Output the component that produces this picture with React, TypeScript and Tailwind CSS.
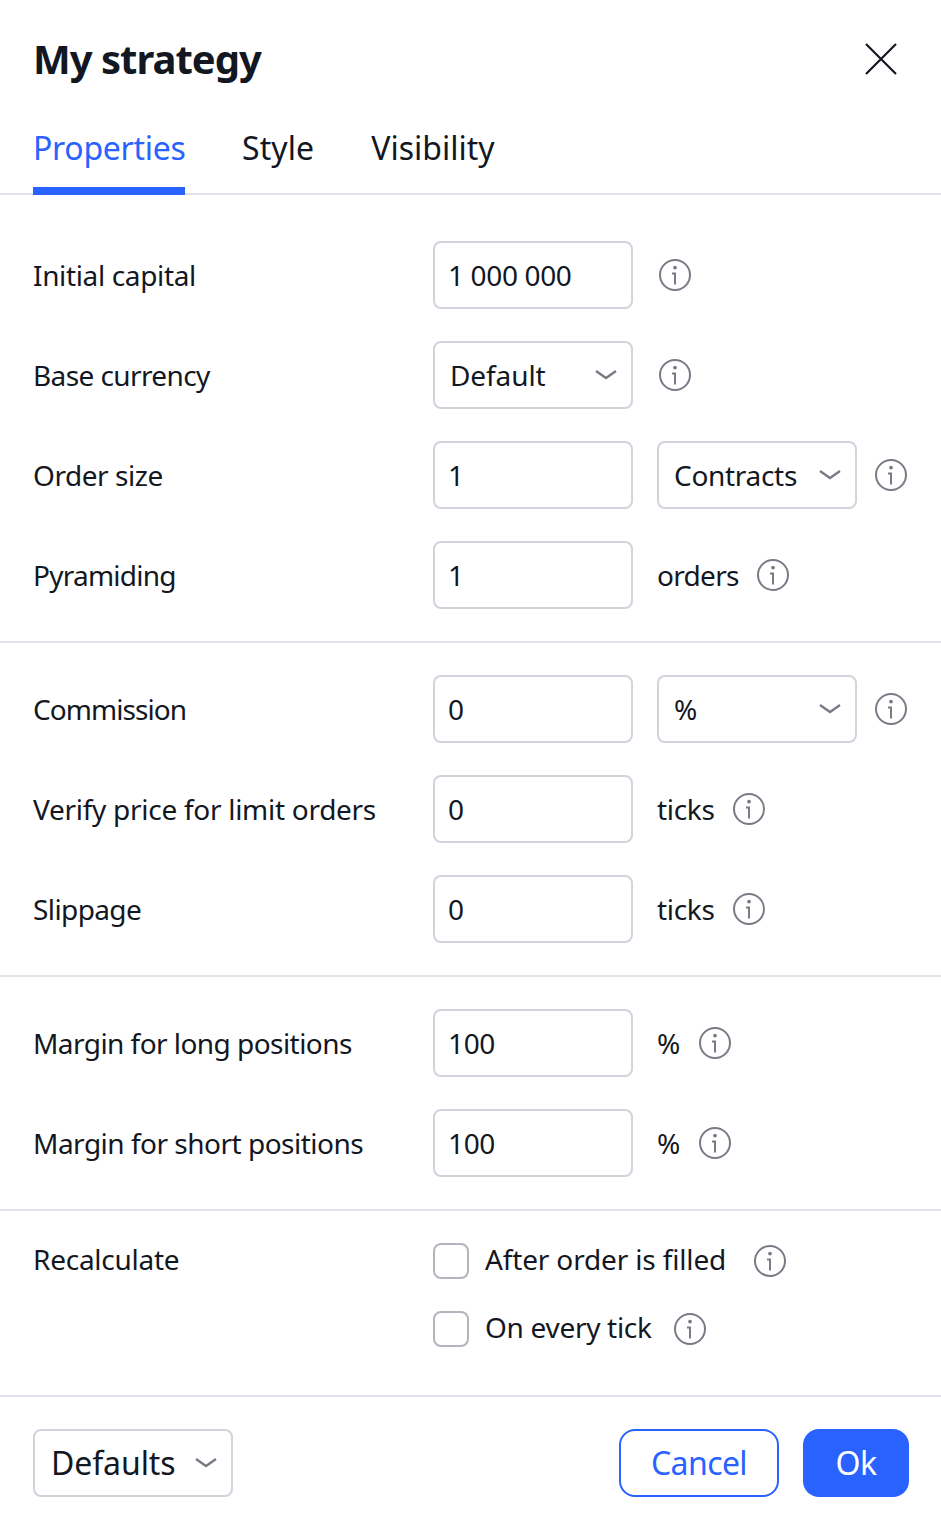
import type { ReactNode } from "react";

function InfoIcon() {
  return (
    <svg className="w-8 h-8 shrink-0 text-[#787b86]" viewBox="0 0 32 32" fill="none" stroke="currentColor">
      <circle cx="16" cy="16" r="15" strokeWidth={2} />
      <circle cx="16" cy="8.6" r="1.9" fill="currentColor" stroke="none" />
      <path d="M13 14.5h3v11" strokeWidth={2} />
    </svg>
  );
}

function Chevron() {
  return (
    <svg className="w-6 h-6 shrink-0 text-[#787b86]" viewBox="0 0 24 24" fill="none" stroke="currentColor" strokeWidth={2.4}>
      <path d="M2 8l10 7 10-7" />
    </svg>
  );
}

function Field({ value }: { value: string }) {
  return (
    <div className="w-[200px] h-[68px] shrink-0 flex items-center px-[13px] border-2 border-[#d1d4dc] rounded-lg bg-white tracking-[-0.35px]">
      {value}
    </div>
  );
}

function Select({ value, tracking = "tracking-[-0.1px]" }: { value: string; tracking?: string }) {
  return (
    <div className={`w-[200px] h-[68px] shrink-0 flex items-center justify-between pl-[15px] pr-[13px] border-2 border-[#d1d4dc] rounded-lg bg-white ${tracking}`}>
      <span>{value}</span>
      <Chevron />
    </div>
  );
}

function Row({ label, tracking = "tracking-[-0.35px]", children }: { label: string; tracking?: string; children: ReactNode }) {
  return (
    <div className="flex items-center h-[68px]">
      <div className={`w-[400px] shrink-0 ${tracking}`}>{label}</div>
      {children}
    </div>
  );
}

function Unit({ text, tracking }: { text: string; tracking: string }) {
  return (
    <div className={`flex items-center ml-6 gap-[18px] ${tracking}`}>
      <span>{text}</span>
      <InfoIcon />
    </div>
  );
}

function CheckRow({ label, width, tracking }: { label: string; width: string; tracking: string }) {
  return (
    <div className={`flex items-center h-9 ${width}`}>
      <div className="w-9 h-9 border-2 border-[#b2b5be] rounded-lg shrink-0" />
      <span className={`ml-4 leading-[32px] pb-1 whitespace-nowrap ${tracking}`}>{label}</span>
      <div className="ml-auto"><InfoIcon /></div>
    </div>
  );
}

export default function App() {
  return (
    <div className="w-[941px] h-[1521px] bg-white text-[#131722] text-[28px] font-['Noto_Sans',sans-serif] flex flex-col">
      {/* Header */}
      <div className="flex items-center justify-between pl-[33px] pr-[44px] h-[121px] pb-1 shrink-0">
        <h1 className="text-[40px] font-bold tracking-[-1px]">My strategy</h1>
        <svg className="w-8 h-8" viewBox="0 0 32 32" fill="none" stroke="currentColor" strokeWidth={2.2}>
          <path d="M1 1l30 30M31 1L1 31" />
        </svg>
      </div>

      {/* Tabs */}
      <div className="flex gap-[57px] pl-[33px] h-[74px] border-b-2 border-[#e0e3eb] text-[32px] shrink-0">
        <div className="h-[74px] w-[152px] pt-[3px] border-b-[8px] border-[#2962ff] text-[#2962ff] whitespace-nowrap tracking-[-0.3px]">Properties</div>
        <div className="pt-[3px] tracking-[0.1px]">Style</div>
        <div className="pt-[3px]">Visibility</div>
      </div>

      {/* Position settings */}
      <div className="pl-[33px] pt-[46px] pb-8 flex flex-col gap-8 border-b-2 border-[#e0e3eb]">
        <Row label="Initial capital">
          <Field value="1 000 000" />
          <div className="ml-[26px]"><InfoIcon /></div>
        </Row>
        <Row label="Base currency" tracking="tracking-[-0.6px]">
          <Select value="Default" />
          <div className="ml-[26px]"><InfoIcon /></div>
        </Row>
        <Row label="Order size" tracking="tracking-[-0.45px]">
          <Field value="1" />
          <div className="ml-6"><Select value="Contracts" tracking="tracking-[-0.3px]" /></div>
          <div className="ml-[18px]"><InfoIcon /></div>
        </Row>
        <Row label="Pyramiding" tracking="tracking-[-0.75px]">
          <Field value="1" />
          <Unit text="orders" tracking="tracking-[-0.7px]" />
        </Row>
      </div>

      {/* Costs */}
      <div className="pl-[33px] pt-8 pb-8 flex flex-col gap-8 border-b-2 border-[#e0e3eb]">
        <Row label="Commission" tracking="tracking-[-0.95px]">
          <Field value="0" />
          <div className="ml-6"><Select value="%" /></div>
          <div className="ml-[18px]"><InfoIcon /></div>
        </Row>
        <Row label="Verify price for limit orders" tracking="tracking-[-0.28px]">
          <Field value="0" />
          <Unit text="ticks" tracking="tracking-[-0.3px]" />
        </Row>
        <Row label="Slippage" tracking="tracking-[-0.6px]">
          <Field value="0" />
          <Unit text="ticks" tracking="tracking-[-0.3px]" />
        </Row>
      </div>

      {/* Margin */}
      <div className="pl-[33px] pt-8 pb-8 flex flex-col gap-8 border-b-2 border-[#e0e3eb]">
        <Row label="Margin for long positions" tracking="tracking-[-0.55px]">
          <Field value="100" />
          <Unit text="%" tracking="tracking-[0.5px]" />
        </Row>
        <Row label="Margin for short positions" tracking="tracking-[-0.5px]">
          <Field value="100" />
          <Unit text="%" tracking="tracking-[0.5px]" />
        </Row>
      </div>

      {/* Recalculate */}
      <div className="pl-[33px] pt-8 pb-12 flex border-b-2 border-[#e0e3eb]">
        <div className="w-[400px] shrink-0 tracking-[-0.25px] leading-[32px]">Recalculate</div>
        <div className="flex flex-col gap-8">
          <CheckRow label="After order is filled" width="w-[353px]" tracking="tracking-[-0.15px]" />
          <CheckRow label="On every tick" width="w-[273px]" tracking="tracking-[-0.3px]" />
        </div>
      </div>

      {/* Footer */}
      <div className="flex items-center justify-between pl-[33px] pr-8 pt-8">
        <div className="w-[200px] h-[68px] flex items-center justify-between pl-4 pr-[13px] border-2 border-[#d1d4dc] rounded-lg text-[32px] tracking-[-0.1px]">
          <span>Defaults</span>
          <Chevron />
        </div>
        <div className="flex gap-6 text-[32px] tracking-[-0.6px]">
          <button className="w-40 h-[68px] border-2 border-[#2962ff] rounded-2xl text-[#2962ff]">Cancel</button>
          <button className="w-[106px] h-[68px] bg-[#2962ff] rounded-2xl text-white">Ok</button>
        </div>
      </div>
    </div>
  );
}
